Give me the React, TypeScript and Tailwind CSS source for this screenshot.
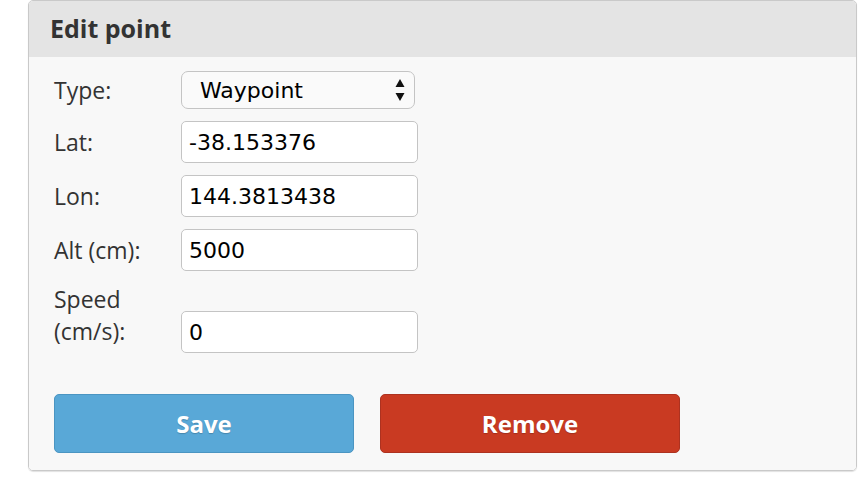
import { useState } from "react";

// Edit point panel — waypoint form with Save / Remove actions

const labelFont = { fontFamily: '"Open Sans", "Liberation Sans", sans-serif' };

function Field({
  label,
  value,
  onChange,
}: {
  label: string;
  value: string;
  onChange: (v: string) => void;
}) {
  return (
    <div className="flex items-center">
      <label className="w-[127px] text-[23px] text-[#333]">{label}</label>
      <input
        value={value}
        onChange={(e) => onChange(e.target.value)}
        className="h-[42px] w-[237px] rounded-[5px] border border-[#c4c4c4] bg-white pl-[7px] text-[22px] text-black outline-none font-['DejaVu_Sans',sans-serif]"
      />
    </div>
  );
}

export default function App() {
  const [lat, setLat] = useState("-38.153376");
  const [lon, setLon] = useState("144.3813438");
  const [alt, setAlt] = useState("5000");
  const [speed, setSpeed] = useState("0");

  return (
    <div className="min-h-[486px] w-[866px] bg-white" style={labelFont}>
      <div className="ml-[28px] w-[829px] overflow-hidden rounded-[5px] border border-[#c9c9c9] shadow-[0_1px_1px_rgba(0,0,0,0.12)]">
        {/* Header */}
        <div className="flex h-[56px] items-center bg-[#e4e4e4] pl-[21px]">
          <h2 className="text-[25px] font-bold text-[#333]">Edit point</h2>
        </div>

        {/* Body */}
        <div className="bg-[#f8f8f8] pl-[25px] pt-[14px] pb-[17px]">
          <div className="flex flex-col gap-[12px]">
            <div className="flex items-center">
              <label className="w-[127px] text-[23px] text-[#333]">Type:</label>
              <div className="flex h-[38px] w-[234px] items-center justify-between rounded-[7px] border border-[#c4c4c4] bg-[#fafafa] pl-[18px] pr-[9px] text-[22px] text-black font-['DejaVu_Sans',sans-serif]">
                <span>Waypoint</span>
                <svg width="10" height="23" viewBox="0 0 10 23">
                  <path d="M5 0 L9.5 8 L0.5 8 Z" fill="#111" />
                  <path d="M0.5 14 L9.5 14 L5 22 Z" fill="#111" />
                </svg>
              </div>
            </div>
            <Field label="Lat:" value={lat} onChange={setLat} />
            <Field label="Lon:" value={lon} onChange={setLon} />
            <Field label="Alt (cm):" value={alt} onChange={setAlt} />
            <div className="flex items-start">
              <label className="w-[127px] text-[23px] leading-[32px] text-[#333]">
                Speed
                <br />
                (cm/s):
              </label>
              <input
                value={speed}
                onChange={(e) => setSpeed(e.target.value)}
                className="mt-[28px] h-[42px] w-[237px] rounded-[5px] border border-[#c4c4c4] bg-white pl-[7px] text-[22px] text-black outline-none font-['DejaVu_Sans',sans-serif]"
              />
            </div>
          </div>

          {/* Actions */}
          <div className="mt-[41px] flex gap-[26px]">
            <button
              type="button"
              className="h-[59px] w-[300px] rounded-[5px] border border-[#4b95c2] bg-[#59a8d7] text-[24px] font-bold text-white [text-shadow:0_1px_1px_rgba(0,0,0,0.2)]"
            >
              Save
            </button>
            <button
              type="button"
              className="h-[59px] w-[300px] rounded-[5px] border border-[#ad3220] bg-[#c93a22] text-[24px] font-bold text-white [text-shadow:0_1px_1px_rgba(0,0,0,0.2)]"
            >
              Remove
            </button>
          </div>
        </div>
      </div>
    </div>
  );
}
